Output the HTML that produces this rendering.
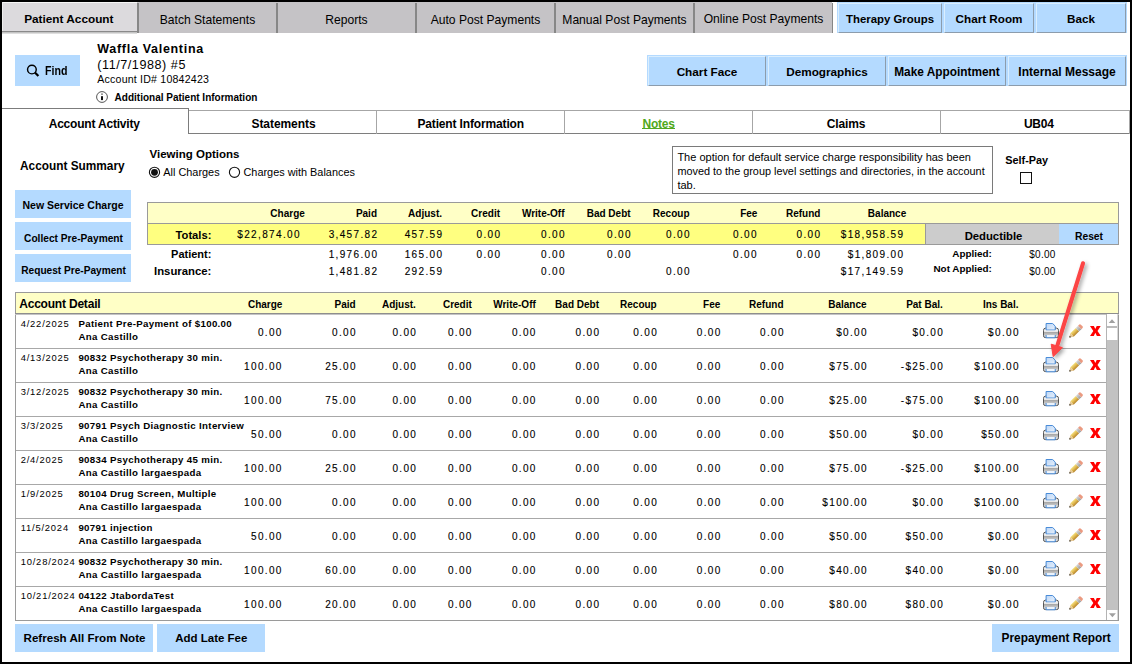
<!DOCTYPE html><html><head><meta charset="utf-8"><style>
html,body{margin:0;padding:0;background:#fff;}
body{width:1132px;height:664px;position:relative;overflow:hidden;font-family:'Liberation Sans',sans-serif;}
div,span,svg{position:absolute;}
.t{white-space:nowrap;line-height:1;}
</style></head><body>
<div style="left:2px;top:2px;width:135px;height:31px;background:#dcdadd;"></div>
<div style="left:2px;top:2px;width:135px;height:1px;background:#f6f6f6;"></div>
<div style="left:2px;top:2px;width:1px;height:29px;background:#ededed;"></div>
<div style="left:2px;top:31px;width:135px;height:1px;background:#8a8a8a;"></div>
<div style="left:2px;top:32px;width:135px;height:1px;background:#c4c4c4;"></div>
<div style="left:2px;top:33px;width:135px;height:1px;background:#dedede;"></div>
<span class="t" style="left:-231.2px;width:600px;text-align:center;top:14px;font-size:11.8px;font-weight:bold;color:#000;">Patient Account</span>
<div style="left:137px;top:2px;width:139px;height:31px;background:#c5c3c6;"></div>
<div style="left:137px;top:3px;width:2px;height:30px;background:#878787;"></div>
<span class="t" style="left:-92.5px;width:600px;text-align:center;top:14px;font-size:12.1px;color:#000;">Batch Statements</span>
<div style="left:276px;top:2px;width:139px;height:31px;background:#c5c3c6;"></div>
<div style="left:276px;top:3px;width:2px;height:30px;background:#878787;"></div>
<span class="t" style="left:46.5px;width:600px;text-align:center;top:14px;font-size:12.1px;color:#000;">Reports</span>
<div style="left:415px;top:2px;width:139px;height:31px;background:#c5c3c6;"></div>
<div style="left:415px;top:3px;width:2px;height:30px;background:#878787;"></div>
<span class="t" style="left:185.5px;width:600px;text-align:center;top:14px;font-size:12.1px;color:#000;">Auto Post Payments</span>
<div style="left:554px;top:2px;width:139px;height:31px;background:#c5c3c6;"></div>
<div style="left:554px;top:3px;width:2px;height:30px;background:#878787;"></div>
<span class="t" style="left:324.5px;width:600px;text-align:center;top:14px;font-size:12.1px;color:#000;">Manual Post Payments</span>
<div style="left:693px;top:2px;width:139px;height:31px;background:#c5c3c6;"></div>
<div style="left:693px;top:3px;width:2px;height:30px;background:#878787;"></div>
<span class="t" style="left:463.5px;width:600px;text-align:center;top:13px;font-size:12.1px;color:#000;">Online Post Payments</span>
<div style="left:832px;top:3px;width:1px;height:30px;background:#878787;"></div>
<div style="left:837px;top:2px;width:290px;height:31px;background:#b4daff;"></div>
<div style="left:838px;top:3px;width:104px;height:30px;background:#b4daff;border-top:1px solid #daeefe;border-left:1px solid #daeefe;border-right:1px solid #8c9cac;border-bottom:1px solid #8c9cac;box-sizing:border-box;"></div>
<span class="t" style="left:590.0px;width:600px;text-align:center;top:14px;font-size:11.4px;font-weight:bold;color:#000;">Therapy Groups</span>
<div style="left:944px;top:3px;width:90px;height:30px;background:#b4daff;border-top:1px solid #daeefe;border-left:1px solid #daeefe;border-right:1px solid #8c9cac;border-bottom:1px solid #8c9cac;box-sizing:border-box;"></div>
<span class="t" style="left:689.0px;width:600px;text-align:center;top:13px;font-size:11.7px;font-weight:bold;color:#000;">Chart Room</span>
<div style="left:1036px;top:3px;width:90px;height:30px;background:#b4daff;border-top:1px solid #daeefe;border-left:1px solid #daeefe;border-right:1px solid #8c9cac;border-bottom:1px solid #8c9cac;box-sizing:border-box;"></div>
<span class="t" style="left:781.0px;width:600px;text-align:center;top:13px;font-size:11.7px;font-weight:bold;color:#000;">Back</span>
<div style="left:15px;top:55px;width:65px;height:31px;background:#b4daff;"></div>
<svg style="left:25px;top:63px" width="16" height="16" viewBox="0 0 16 16"><circle cx="6.9" cy="6.5" r="4.35" fill="none" stroke="#000" stroke-width="1.45"/><line x1="9.9" y1="9.5" x2="13.4" y2="13.0" stroke="#000" stroke-width="2.2" stroke-linecap="butt"/></svg>
<span class="t" style="left:45.3px;top:65px;font-size:12px;font-weight:bold;color:#000;transform:scaleX(0.885);transform-origin:left top;">Find</span>
<span class="t" style="left:97.3px;top:43px;font-size:12.5px;font-weight:bold;letter-spacing:0.7px;color:#000;">Waffla Valentina</span>
<span class="t" style="left:97.3px;top:59px;font-size:12.6px;letter-spacing:0.55px;color:#000;">(11/7/1988) #5</span>
<span class="t" style="left:97.3px;top:74px;font-size:10.6px;letter-spacing:0.2px;color:#000;">Account ID# 10842423</span>
<svg style="left:96px;top:90.8px" width="12" height="12" viewBox="0 0 12 12"><circle cx="6" cy="6" r="5.4" fill="none" stroke="#555" stroke-width="1"/><rect x="5" y="5.2" width="2" height="3.9" fill="#111"/><rect x="5.2" y="2.4" width="1.6" height="1.5" fill="#777"/></svg>
<span class="t" style="left:114.6px;top:93px;font-size:10.0px;font-weight:bold;color:#000;">Additional Patient Information</span>
<div style="left:647px;top:55px;width:480px;height:31px;background:#b4daff;"></div>
<div style="left:648px;top:56px;width:118px;height:30px;background:#b4daff;border-top:1px solid #daeefe;border-left:1px solid #daeefe;border-right:1px solid #8c9cac;border-bottom:1px solid #8c9cac;box-sizing:border-box;"></div>
<span class="t" style="left:407.0px;width:600px;text-align:center;top:66px;font-size:11.76px;font-weight:bold;color:#000;">Chart Face</span>
<div style="left:768px;top:56px;width:118px;height:30px;background:#b4daff;border-top:1px solid #daeefe;border-left:1px solid #daeefe;border-right:1px solid #8c9cac;border-bottom:1px solid #8c9cac;box-sizing:border-box;"></div>
<span class="t" style="left:527.0px;width:600px;text-align:center;top:66px;font-size:11.76px;font-weight:bold;color:#000;">Demographics</span>
<div style="left:888px;top:56px;width:118px;height:30px;background:#b4daff;border-top:1px solid #daeefe;border-left:1px solid #daeefe;border-right:1px solid #8c9cac;border-bottom:1px solid #8c9cac;box-sizing:border-box;"></div>
<span class="t" style="left:647.0px;width:600px;text-align:center;top:67px;font-size:11.85px;font-weight:bold;color:#000;">Make Appointment</span>
<div style="left:1008px;top:56px;width:118px;height:30px;background:#b4daff;border-top:1px solid #daeefe;border-left:1px solid #daeefe;border-right:1px solid #8c9cac;border-bottom:1px solid #8c9cac;box-sizing:border-box;"></div>
<span class="t" style="left:767.0px;width:600px;text-align:center;top:66px;font-size:12.0px;font-weight:bold;color:#000;">Internal Message</span>
<div style="left:2px;top:108px;width:187px;height:1px;background:#7c7c7c;"></div>
<div style="left:188px;top:108px;width:1px;height:26px;background:#7c7c7c;"></div>
<div style="left:189px;top:110px;width:941px;height:1px;background:#a6a6a6;"></div>
<div style="left:189px;top:133px;width:941px;height:1px;background:#7e7e7e;"></div>
<div style="left:376px;top:110px;width:1px;height:24px;background:#a6a6a6;"></div>
<div style="left:564px;top:110px;width:1px;height:24px;background:#a6a6a6;"></div>
<div style="left:752px;top:110px;width:1px;height:24px;background:#a6a6a6;"></div>
<div style="left:940px;top:110px;width:1px;height:24px;background:#a6a6a6;"></div>
<div style="left:1129px;top:110px;width:1px;height:24px;background:#a6a6a6;"></div>
<span class="t" style="left:-205.8px;width:600px;text-align:center;top:118px;font-size:12px;font-weight:bold;letter-spacing:-0.2px;color:#000;">Account Activity</span>
<span class="t" style="left:-16.5px;width:600px;text-align:center;top:118px;font-size:12px;font-weight:bold;letter-spacing:-0.07px;color:#000;">Statements</span>
<span class="t" style="left:170.7px;width:600px;text-align:center;top:118px;font-size:12px;font-weight:bold;letter-spacing:-0.15px;color:#000;">Patient Information</span>
<span class="t" style="left:358.6px;width:600px;text-align:center;top:118px;font-size:12px;font-weight:bold;letter-spacing:-0.2px;color:#50a820;">Notes</span>
<span class="t" style="left:546px;width:600px;text-align:center;top:118px;font-size:12px;font-weight:bold;letter-spacing:-0.15px;color:#000;">Claims</span>
<span class="t" style="left:738.8px;width:600px;text-align:center;top:118px;font-size:12px;font-weight:bold;letter-spacing:-0.25px;color:#000;">UB04</span>
<div style="left:642px;top:128px;width:33px;height:1px;background:#50a820;"></div>
<span class="t" style="left:20px;top:161px;font-size:11.85px;font-weight:bold;color:#000;">Account Summary</span>
<div style="left:15px;top:190px;width:116px;height:28px;background:#b4daff;"></div>
<span class="t" style="left:-227px;width:600px;text-align:center;top:200px;font-size:10.5px;font-weight:bold;color:#000;">New Service Charge</span>
<div style="left:15px;top:222px;width:116px;height:28px;background:#b4daff;"></div>
<span class="t" style="left:-226.5px;width:600px;text-align:center;top:234px;font-size:10.18px;font-weight:bold;color:#000;">Collect Pre-Payment</span>
<div style="left:15px;top:254px;width:116px;height:28px;background:#b4daff;"></div>
<span class="t" style="left:-226.4px;width:600px;text-align:center;top:266px;font-size:10.13px;font-weight:bold;color:#000;">Request Pre-Payment</span>
<span class="t" style="left:149.5px;top:149px;font-size:11.5px;font-weight:bold;color:#000;">Viewing Options</span>
<svg style="left:148px;top:166px" width="14" height="13" viewBox="0 0 14 13"><circle cx="6.5" cy="6.3" r="5.1" fill="#fff" stroke="#111" stroke-width="1.1"/><circle cx="6.5" cy="6.3" r="3.4" fill="#111"/></svg>
<span class="t" style="left:163.3px;top:167px;font-size:10.9px;color:#000;">All Charges</span>
<svg style="left:228px;top:166px" width="14" height="13" viewBox="0 0 14 13"><circle cx="6.5" cy="6.3" r="5.1" fill="#fff" stroke="#111" stroke-width="1.1"/></svg>
<span class="t" style="left:243.5px;top:167px;font-size:10.9px;color:#000;">Charges with Balances</span>
<div style="left:672px;top:146px;width:321px;height:48px;border:1px solid #7a7a7a;box-sizing:border-box;"></div>
<span class="t" style="left:677.4px;top:152px;font-size:11.0px;color:#000;">The option for default service charge responsibility has been</span>
<span class="t" style="left:677.4px;top:166px;font-size:10.87px;color:#000;">moved to the group level settings and directories, in the account</span>
<span class="t" style="left:677.4px;top:180px;font-size:11.0px;color:#000;">tab.</span>
<span class="t" style="left:1005.2px;top:155px;font-size:10.9px;font-weight:bold;color:#000;">Self-Pay</span>
<div style="left:1020px;top:172px;width:12px;height:12px;border:1.2px solid #111;box-sizing:border-box;background:#fff;"></div>
<div style="left:147px;top:202px;width:972px;height:43px;border:1px solid #9a9a9a;box-sizing:border-box;"></div>
<div style="left:148px;top:203px;width:970px;height:20px;background:#ffffc6;"></div>
<div style="left:147px;top:223px;width:972px;height:1px;background:#9a9a9a;"></div>
<div style="left:148px;top:224px;width:777px;height:20px;background:#ffff80;"></div>
<div style="left:925px;top:224px;width:134px;height:20px;background:#cccccc;border-left:1px solid #9a9a9a;box-sizing:border-box;"></div>
<div style="left:1059px;top:224px;width:59px;height:20px;background:#b4daff;"></div>
<span class="t" style="left:693.5px;width:600px;text-align:center;top:231px;font-size:11.3px;font-weight:bold;color:#000;">Deductible</span>
<span class="t" style="left:789px;width:600px;text-align:center;top:232px;font-size:10.3px;font-weight:bold;color:#000;">Reset</span>
<span class="t" style="right:827.2px;top:209px;font-size:10.0px;font-weight:bold;color:#000;">Charge</span>
<span class="t" style="right:755px;top:209px;font-size:10.0px;font-weight:bold;color:#000;">Paid</span>
<span class="t" style="right:690px;top:209px;font-size:10.0px;font-weight:bold;color:#000;">Adjust.</span>
<span class="t" style="right:632px;top:209px;font-size:10.0px;font-weight:bold;color:#000;">Credit</span>
<span class="t" style="right:567.5px;top:209px;font-size:10.0px;font-weight:bold;color:#000;">Write-Off</span>
<span class="t" style="right:501.4px;top:209px;font-size:10.0px;font-weight:bold;color:#000;">Bad Debt</span>
<span class="t" style="right:442.5px;top:209px;font-size:10.0px;font-weight:bold;color:#000;">Recoup</span>
<span class="t" style="right:374.6px;top:209px;font-size:10.0px;font-weight:bold;color:#000;">Fee</span>
<span class="t" style="right:311.6px;top:209px;font-size:10.0px;font-weight:bold;color:#000;">Refund</span>
<span class="t" style="right:225.79999999999995px;top:209px;font-size:10.0px;font-weight:bold;color:#000;">Balance</span>
<span class="t" style="right:920.6px;top:230px;font-size:11.2px;font-weight:bold;color:#000;">Totals:</span>
<span class="t" style="right:920.6px;top:249px;font-size:11.0px;font-weight:bold;color:#000;">Patient:</span>
<span class="t" style="right:920.6px;top:266px;font-size:11.35px;font-weight:bold;color:#000;">Insurance:</span>
<span class="t" style="right:831.15px;top:230px;font-size:10.0px;letter-spacing:1.35px;color:#000;-webkit-text-stroke:0.12px #000;">$22,874.00</span>
<span class="t" style="right:753.65px;top:230px;font-size:10.0px;letter-spacing:1.35px;color:#000;-webkit-text-stroke:0.12px #000;">3,457.82</span>
<span class="t" style="right:688.65px;top:230px;font-size:10.0px;letter-spacing:1.35px;color:#000;-webkit-text-stroke:0.12px #000;">457.59</span>
<span class="t" style="right:630.65px;top:230px;font-size:10.0px;letter-spacing:1.35px;color:#000;-webkit-text-stroke:0.12px #000;">0.00</span>
<span class="t" style="right:566.15px;top:230px;font-size:10.0px;letter-spacing:1.35px;color:#000;-webkit-text-stroke:0.12px #000;">0.00</span>
<span class="t" style="right:500.04999999999995px;top:230px;font-size:10.0px;letter-spacing:1.35px;color:#000;-webkit-text-stroke:0.12px #000;">0.00</span>
<span class="t" style="right:441.15px;top:230px;font-size:10.0px;letter-spacing:1.35px;color:#000;-webkit-text-stroke:0.12px #000;">0.00</span>
<span class="t" style="right:374.15px;top:230px;font-size:10.0px;letter-spacing:1.35px;color:#000;-webkit-text-stroke:0.12px #000;">0.00</span>
<span class="t" style="right:310.65px;top:230px;font-size:10.0px;letter-spacing:1.35px;color:#000;-webkit-text-stroke:0.12px #000;">0.00</span>
<span class="t" style="right:227.65px;top:230px;font-size:10.0px;letter-spacing:1.35px;color:#000;-webkit-text-stroke:0.12px #000;">$18,958.59</span>
<span class="t" style="right:753.65px;top:250px;font-size:10.0px;letter-spacing:1.35px;color:#000;-webkit-text-stroke:0.12px #000;">1,976.00</span>
<span class="t" style="right:688.65px;top:250px;font-size:10.0px;letter-spacing:1.35px;color:#000;-webkit-text-stroke:0.12px #000;">165.00</span>
<span class="t" style="right:630.65px;top:250px;font-size:10.0px;letter-spacing:1.35px;color:#000;-webkit-text-stroke:0.12px #000;">0.00</span>
<span class="t" style="right:566.15px;top:250px;font-size:10.0px;letter-spacing:1.35px;color:#000;-webkit-text-stroke:0.12px #000;">0.00</span>
<span class="t" style="right:500.04999999999995px;top:250px;font-size:10.0px;letter-spacing:1.35px;color:#000;-webkit-text-stroke:0.12px #000;">0.00</span>
<span class="t" style="right:374.15px;top:250px;font-size:10.0px;letter-spacing:1.35px;color:#000;-webkit-text-stroke:0.12px #000;">0.00</span>
<span class="t" style="right:310.65px;top:250px;font-size:10.0px;letter-spacing:1.35px;color:#000;-webkit-text-stroke:0.12px #000;">0.00</span>
<span class="t" style="right:227.65px;top:250px;font-size:10.0px;letter-spacing:1.35px;color:#000;-webkit-text-stroke:0.12px #000;">$1,809.00</span>
<span class="t" style="right:753.65px;top:267px;font-size:10.0px;letter-spacing:1.35px;color:#000;-webkit-text-stroke:0.12px #000;">1,481.82</span>
<span class="t" style="right:688.65px;top:267px;font-size:10.0px;letter-spacing:1.35px;color:#000;-webkit-text-stroke:0.12px #000;">292.59</span>
<span class="t" style="right:566.15px;top:267px;font-size:10.0px;letter-spacing:1.35px;color:#000;-webkit-text-stroke:0.12px #000;">0.00</span>
<span class="t" style="right:441.15px;top:267px;font-size:10.0px;letter-spacing:1.35px;color:#000;-webkit-text-stroke:0.12px #000;">0.00</span>
<span class="t" style="right:227.65px;top:267px;font-size:10.0px;letter-spacing:1.35px;color:#000;-webkit-text-stroke:0.12px #000;">$17,149.59</span>
<span class="t" style="right:140.20000000000005px;top:249px;font-size:9.9px;font-weight:bold;color:#000;">Applied:</span>
<span class="t" style="right:140.20000000000005px;top:264px;font-size:9.9px;font-weight:bold;color:#000;">Not Applied:</span>
<span class="t" style="right:76.29999999999991px;top:250px;font-size:10.0px;letter-spacing:0.3px;color:#000;">$0.00</span>
<span class="t" style="right:76.29999999999991px;top:267px;font-size:10.0px;letter-spacing:0.3px;color:#000;">$0.00</span>
<div style="left:15px;top:292px;width:1104px;height:329px;border:1px solid #9a9a9a;box-sizing:border-box;"></div>
<div style="left:16px;top:293px;width:1102px;height:20px;background:#ffffc6;"></div>
<div style="left:15px;top:313px;width:1104px;height:1px;background:#8e8e8e;"></div>
<div style="left:15px;top:314px;width:1104px;height:1px;background:#c4c4c4;"></div>
<span class="t" style="left:19.2px;top:298px;font-size:12.0px;font-weight:bold;letter-spacing:-0.2px;color:#000;">Account Detail</span>
<span class="t" style="right:849.6px;top:300px;font-size:10.0px;font-weight:bold;color:#000;">Charge</span>
<span class="t" style="right:776.4px;top:300px;font-size:10.0px;font-weight:bold;color:#000;">Paid</span>
<span class="t" style="right:716.1px;top:300px;font-size:10.0px;font-weight:bold;color:#000;">Adjust.</span>
<span class="t" style="right:660.2px;top:300px;font-size:10.0px;font-weight:bold;color:#000;">Credit</span>
<span class="t" style="right:596.2px;top:300px;font-size:10.0px;font-weight:bold;color:#000;">Write-Off</span>
<span class="t" style="right:533px;top:300px;font-size:10.0px;font-weight:bold;color:#000;">Bad Debt</span>
<span class="t" style="right:475.29999999999995px;top:300px;font-size:10.0px;font-weight:bold;color:#000;">Recoup</span>
<span class="t" style="right:411.70000000000005px;top:300px;font-size:10.0px;font-weight:bold;color:#000;">Fee</span>
<span class="t" style="right:348.5px;top:300px;font-size:10.0px;font-weight:bold;color:#000;">Refund</span>
<span class="t" style="right:265.4px;top:300px;font-size:10.0px;font-weight:bold;color:#000;">Balance</span>
<span class="t" style="right:189.20000000000005px;top:300px;font-size:10.0px;font-weight:bold;color:#000;">Pat Bal.</span>
<span class="t" style="right:113.5px;top:300px;font-size:10.0px;font-weight:bold;color:#000;">Ins Bal.</span>
<div style="left:16px;top:348px;width:1090px;height:1px;background:#a8a8a8;"></div>
<span class="t" style="left:20.7px;top:319px;font-size:9.4px;letter-spacing:0.8px;color:#000;">4/22/2025</span>
<span class="t" style="left:78.4px;top:319px;font-size:9.7px;font-weight:bold;letter-spacing:0.33px;color:#000;">Patient Pre-Payment of $100.00</span>
<span class="t" style="left:78.4px;top:332px;font-size:9.7px;font-weight:bold;letter-spacing:0.33px;color:#000;">Ana Castillo</span>
<span class="t" style="right:849.25px;top:328px;font-size:10.0px;letter-spacing:1.35px;color:#000;-webkit-text-stroke:0.12px #000;">0.00</span>
<span class="t" style="right:775.05px;top:328px;font-size:10.0px;letter-spacing:1.35px;color:#000;-webkit-text-stroke:0.12px #000;">0.00</span>
<span class="t" style="right:714.75px;top:328px;font-size:10.0px;letter-spacing:1.35px;color:#000;-webkit-text-stroke:0.12px #000;">0.00</span>
<span class="t" style="right:659.25px;top:328px;font-size:10.0px;letter-spacing:1.35px;color:#000;-webkit-text-stroke:0.12px #000;">0.00</span>
<span class="t" style="right:595.25px;top:328px;font-size:10.0px;letter-spacing:1.35px;color:#000;-webkit-text-stroke:0.12px #000;">0.00</span>
<span class="t" style="right:531.65px;top:328px;font-size:10.0px;letter-spacing:1.35px;color:#000;-webkit-text-stroke:0.12px #000;">0.00</span>
<span class="t" style="right:473.94999999999993px;top:328px;font-size:10.0px;letter-spacing:1.35px;color:#000;-webkit-text-stroke:0.12px #000;">0.00</span>
<span class="t" style="right:410.35px;top:328px;font-size:10.0px;letter-spacing:1.35px;color:#000;-webkit-text-stroke:0.12px #000;">0.00</span>
<span class="t" style="right:347.15px;top:328px;font-size:10.0px;letter-spacing:1.35px;color:#000;-webkit-text-stroke:0.12px #000;">0.00</span>
<span class="t" style="right:264.04999999999995px;top:328px;font-size:10.0px;letter-spacing:1.35px;color:#000;-webkit-text-stroke:0.12px #000;">$0.00</span>
<span class="t" style="right:187.85000000000005px;top:328px;font-size:10.0px;letter-spacing:1.35px;color:#000;-webkit-text-stroke:0.12px #000;">$0.00</span>
<span class="t" style="right:112.15px;top:328px;font-size:10.0px;letter-spacing:1.35px;color:#000;-webkit-text-stroke:0.12px #000;">$0.00</span>
<svg style="left:1043px;top:322.8px" width="16" height="16" viewBox="0 0 17 17">
<defs><linearGradient id="pp0" x1="0" y1="0" x2="1" y2="1"><stop offset="0" stop-color="#bcd6f6"/><stop offset="1" stop-color="#e8f1fc"/></linearGradient>
<linearGradient id="pg0" x1="0" y1="0" x2="0" y2="1"><stop offset="0" stop-color="#ffffff"/><stop offset="0.35" stop-color="#e6e6e6"/><stop offset="0.45" stop-color="#a8a8a8"/><stop offset="0.7" stop-color="#c4c4c4"/><stop offset="1" stop-color="#f2f2f2"/></linearGradient></defs>
<path d="M3 5.5 Q3 5 3.5 5 H13.5 Q14 5 14 5.5" fill="none" stroke="#888" stroke-width="1"/>
<path d="M2.5 5.5 H14.5 Q16.5 5.5 16.5 8 V13.5 Q16.5 15.5 14.5 15.5 H2.5 Q0.5 15.5 0.5 13.5 V8 Q0.5 5.5 2.5 5.5 Z" fill="url(#pg0)" stroke="#3a3a3a" stroke-width="0.9"/>
<path d="M3.3 0.5 H10.2 L13 3.3 V7.5 H3.3 Z" fill="url(#pp0)" stroke="#3b82d4" stroke-width="1"/>
<rect x="2.2" y="8" width="12.6" height="0.8" fill="#f4f4f4"/>
<path d="M3.3 12.8 V15.7 H13 V12.8" fill="#eef5fd" stroke="#3b82d4" stroke-width="1"/>
</svg>
<svg style="left:1068.2px;top:323.6px;overflow:visible" width="15" height="15" viewBox="0 0 15 15">
<defs><linearGradient id="pc0" x1="0" y1="0" x2="0" y2="1"><stop offset="0" stop-color="#f4e07e"/><stop offset="0.5" stop-color="#e0b850"/><stop offset="1" stop-color="#b4822a"/></linearGradient>
<linearGradient id="pf0" x1="0" y1="0" x2="0" y2="1"><stop offset="0" stop-color="#d8d8d8"/><stop offset="1" stop-color="#9a9a9a"/></linearGradient></defs>
<g transform="rotate(-44 7.5 7.5)">
<path d="M2.6 5.1 H10.2 V9.9 H2.6 Z" fill="url(#pc0)"/>
<path d="M-1.15 7.5 L2.6 5.1 V9.9 Z" fill="#e5c690"/>
<path d="M-1.15 7.5 L0.4 6.5 V8.5 Z" fill="#1e1e1e"/>
<path d="M10.2 5.1 H13.4 V9.9 H10.2 Z" fill="url(#pf0)"/>
<path d="M13.4 5.1 H15 Q16.15 5.1 16.15 6.3 V8.7 Q16.15 9.9 15 9.9 H13.4 Z" fill="#eb9a80"/>
</g></svg>
<svg style="left:1090.1px;top:325.8px" width="12" height="11" viewBox="0 0 12 11"><path d="M0 0 H3.9 L5.3 2.9 L6.7 0 H10.7 L7.5 5 L10.9 10.1 H6.9 L5.3 6.8 L3.8 10.1 H0 L3.3 5 Z" fill="#ff0000"/></svg>
<div style="left:16px;top:382px;width:1090px;height:1px;background:#a8a8a8;"></div>
<span class="t" style="left:20.7px;top:353px;font-size:9.4px;letter-spacing:0.8px;color:#000;">4/13/2025</span>
<span class="t" style="left:78.4px;top:353px;font-size:9.7px;font-weight:bold;letter-spacing:0.33px;color:#000;">90832 Psychotherapy 30 min.</span>
<span class="t" style="left:78.4px;top:366px;font-size:9.7px;font-weight:bold;letter-spacing:0.33px;color:#000;">Ana Castillo</span>
<span class="t" style="right:849.25px;top:362px;font-size:10.0px;letter-spacing:1.35px;color:#000;-webkit-text-stroke:0.12px #000;">100.00</span>
<span class="t" style="right:775.05px;top:362px;font-size:10.0px;letter-spacing:1.35px;color:#000;-webkit-text-stroke:0.12px #000;">25.00</span>
<span class="t" style="right:714.75px;top:362px;font-size:10.0px;letter-spacing:1.35px;color:#000;-webkit-text-stroke:0.12px #000;">0.00</span>
<span class="t" style="right:659.25px;top:362px;font-size:10.0px;letter-spacing:1.35px;color:#000;-webkit-text-stroke:0.12px #000;">0.00</span>
<span class="t" style="right:595.25px;top:362px;font-size:10.0px;letter-spacing:1.35px;color:#000;-webkit-text-stroke:0.12px #000;">0.00</span>
<span class="t" style="right:531.65px;top:362px;font-size:10.0px;letter-spacing:1.35px;color:#000;-webkit-text-stroke:0.12px #000;">0.00</span>
<span class="t" style="right:473.94999999999993px;top:362px;font-size:10.0px;letter-spacing:1.35px;color:#000;-webkit-text-stroke:0.12px #000;">0.00</span>
<span class="t" style="right:410.35px;top:362px;font-size:10.0px;letter-spacing:1.35px;color:#000;-webkit-text-stroke:0.12px #000;">0.00</span>
<span class="t" style="right:347.15px;top:362px;font-size:10.0px;letter-spacing:1.35px;color:#000;-webkit-text-stroke:0.12px #000;">0.00</span>
<span class="t" style="right:264.04999999999995px;top:362px;font-size:10.0px;letter-spacing:1.35px;color:#000;-webkit-text-stroke:0.12px #000;">$75.00</span>
<span class="t" style="right:187.85000000000005px;top:362px;font-size:10.0px;letter-spacing:1.35px;color:#000;-webkit-text-stroke:0.12px #000;">-$25.00</span>
<span class="t" style="right:112.15px;top:362px;font-size:10.0px;letter-spacing:1.35px;color:#000;-webkit-text-stroke:0.12px #000;">$100.00</span>
<svg style="left:1043px;top:356.8px" width="16" height="16" viewBox="0 0 17 17">
<defs><linearGradient id="pp1" x1="0" y1="0" x2="1" y2="1"><stop offset="0" stop-color="#bcd6f6"/><stop offset="1" stop-color="#e8f1fc"/></linearGradient>
<linearGradient id="pg1" x1="0" y1="0" x2="0" y2="1"><stop offset="0" stop-color="#ffffff"/><stop offset="0.35" stop-color="#e6e6e6"/><stop offset="0.45" stop-color="#a8a8a8"/><stop offset="0.7" stop-color="#c4c4c4"/><stop offset="1" stop-color="#f2f2f2"/></linearGradient></defs>
<path d="M3 5.5 Q3 5 3.5 5 H13.5 Q14 5 14 5.5" fill="none" stroke="#888" stroke-width="1"/>
<path d="M2.5 5.5 H14.5 Q16.5 5.5 16.5 8 V13.5 Q16.5 15.5 14.5 15.5 H2.5 Q0.5 15.5 0.5 13.5 V8 Q0.5 5.5 2.5 5.5 Z" fill="url(#pg1)" stroke="#3a3a3a" stroke-width="0.9"/>
<path d="M3.3 0.5 H10.2 L13 3.3 V7.5 H3.3 Z" fill="url(#pp1)" stroke="#3b82d4" stroke-width="1"/>
<rect x="2.2" y="8" width="12.6" height="0.8" fill="#f4f4f4"/>
<path d="M3.3 12.8 V15.7 H13 V12.8" fill="#eef5fd" stroke="#3b82d4" stroke-width="1"/>
</svg>
<svg style="left:1068.2px;top:357.6px;overflow:visible" width="15" height="15" viewBox="0 0 15 15">
<defs><linearGradient id="pc1" x1="0" y1="0" x2="0" y2="1"><stop offset="0" stop-color="#f4e07e"/><stop offset="0.5" stop-color="#e0b850"/><stop offset="1" stop-color="#b4822a"/></linearGradient>
<linearGradient id="pf1" x1="0" y1="0" x2="0" y2="1"><stop offset="0" stop-color="#d8d8d8"/><stop offset="1" stop-color="#9a9a9a"/></linearGradient></defs>
<g transform="rotate(-44 7.5 7.5)">
<path d="M2.6 5.1 H10.2 V9.9 H2.6 Z" fill="url(#pc1)"/>
<path d="M-1.15 7.5 L2.6 5.1 V9.9 Z" fill="#e5c690"/>
<path d="M-1.15 7.5 L0.4 6.5 V8.5 Z" fill="#1e1e1e"/>
<path d="M10.2 5.1 H13.4 V9.9 H10.2 Z" fill="url(#pf1)"/>
<path d="M13.4 5.1 H15 Q16.15 5.1 16.15 6.3 V8.7 Q16.15 9.9 15 9.9 H13.4 Z" fill="#eb9a80"/>
</g></svg>
<svg style="left:1090.1px;top:359.8px" width="12" height="11" viewBox="0 0 12 11"><path d="M0 0 H3.9 L5.3 2.9 L6.7 0 H10.7 L7.5 5 L10.9 10.1 H6.9 L5.3 6.8 L3.8 10.1 H0 L3.3 5 Z" fill="#ff0000"/></svg>
<div style="left:16px;top:416px;width:1090px;height:1px;background:#a8a8a8;"></div>
<span class="t" style="left:20.7px;top:387px;font-size:9.4px;letter-spacing:0.8px;color:#000;">3/12/2025</span>
<span class="t" style="left:78.4px;top:387px;font-size:9.7px;font-weight:bold;letter-spacing:0.33px;color:#000;">90832 Psychotherapy 30 min.</span>
<span class="t" style="left:78.4px;top:400px;font-size:9.7px;font-weight:bold;letter-spacing:0.33px;color:#000;">Ana Castillo</span>
<span class="t" style="right:849.25px;top:396px;font-size:10.0px;letter-spacing:1.35px;color:#000;-webkit-text-stroke:0.12px #000;">100.00</span>
<span class="t" style="right:775.05px;top:396px;font-size:10.0px;letter-spacing:1.35px;color:#000;-webkit-text-stroke:0.12px #000;">75.00</span>
<span class="t" style="right:714.75px;top:396px;font-size:10.0px;letter-spacing:1.35px;color:#000;-webkit-text-stroke:0.12px #000;">0.00</span>
<span class="t" style="right:659.25px;top:396px;font-size:10.0px;letter-spacing:1.35px;color:#000;-webkit-text-stroke:0.12px #000;">0.00</span>
<span class="t" style="right:595.25px;top:396px;font-size:10.0px;letter-spacing:1.35px;color:#000;-webkit-text-stroke:0.12px #000;">0.00</span>
<span class="t" style="right:531.65px;top:396px;font-size:10.0px;letter-spacing:1.35px;color:#000;-webkit-text-stroke:0.12px #000;">0.00</span>
<span class="t" style="right:473.94999999999993px;top:396px;font-size:10.0px;letter-spacing:1.35px;color:#000;-webkit-text-stroke:0.12px #000;">0.00</span>
<span class="t" style="right:410.35px;top:396px;font-size:10.0px;letter-spacing:1.35px;color:#000;-webkit-text-stroke:0.12px #000;">0.00</span>
<span class="t" style="right:347.15px;top:396px;font-size:10.0px;letter-spacing:1.35px;color:#000;-webkit-text-stroke:0.12px #000;">0.00</span>
<span class="t" style="right:264.04999999999995px;top:396px;font-size:10.0px;letter-spacing:1.35px;color:#000;-webkit-text-stroke:0.12px #000;">$25.00</span>
<span class="t" style="right:187.85000000000005px;top:396px;font-size:10.0px;letter-spacing:1.35px;color:#000;-webkit-text-stroke:0.12px #000;">-$75.00</span>
<span class="t" style="right:112.15px;top:396px;font-size:10.0px;letter-spacing:1.35px;color:#000;-webkit-text-stroke:0.12px #000;">$100.00</span>
<svg style="left:1043px;top:390.8px" width="16" height="16" viewBox="0 0 17 17">
<defs><linearGradient id="pp2" x1="0" y1="0" x2="1" y2="1"><stop offset="0" stop-color="#bcd6f6"/><stop offset="1" stop-color="#e8f1fc"/></linearGradient>
<linearGradient id="pg2" x1="0" y1="0" x2="0" y2="1"><stop offset="0" stop-color="#ffffff"/><stop offset="0.35" stop-color="#e6e6e6"/><stop offset="0.45" stop-color="#a8a8a8"/><stop offset="0.7" stop-color="#c4c4c4"/><stop offset="1" stop-color="#f2f2f2"/></linearGradient></defs>
<path d="M3 5.5 Q3 5 3.5 5 H13.5 Q14 5 14 5.5" fill="none" stroke="#888" stroke-width="1"/>
<path d="M2.5 5.5 H14.5 Q16.5 5.5 16.5 8 V13.5 Q16.5 15.5 14.5 15.5 H2.5 Q0.5 15.5 0.5 13.5 V8 Q0.5 5.5 2.5 5.5 Z" fill="url(#pg2)" stroke="#3a3a3a" stroke-width="0.9"/>
<path d="M3.3 0.5 H10.2 L13 3.3 V7.5 H3.3 Z" fill="url(#pp2)" stroke="#3b82d4" stroke-width="1"/>
<rect x="2.2" y="8" width="12.6" height="0.8" fill="#f4f4f4"/>
<path d="M3.3 12.8 V15.7 H13 V12.8" fill="#eef5fd" stroke="#3b82d4" stroke-width="1"/>
</svg>
<svg style="left:1068.2px;top:391.6px;overflow:visible" width="15" height="15" viewBox="0 0 15 15">
<defs><linearGradient id="pc2" x1="0" y1="0" x2="0" y2="1"><stop offset="0" stop-color="#f4e07e"/><stop offset="0.5" stop-color="#e0b850"/><stop offset="1" stop-color="#b4822a"/></linearGradient>
<linearGradient id="pf2" x1="0" y1="0" x2="0" y2="1"><stop offset="0" stop-color="#d8d8d8"/><stop offset="1" stop-color="#9a9a9a"/></linearGradient></defs>
<g transform="rotate(-44 7.5 7.5)">
<path d="M2.6 5.1 H10.2 V9.9 H2.6 Z" fill="url(#pc2)"/>
<path d="M-1.15 7.5 L2.6 5.1 V9.9 Z" fill="#e5c690"/>
<path d="M-1.15 7.5 L0.4 6.5 V8.5 Z" fill="#1e1e1e"/>
<path d="M10.2 5.1 H13.4 V9.9 H10.2 Z" fill="url(#pf2)"/>
<path d="M13.4 5.1 H15 Q16.15 5.1 16.15 6.3 V8.7 Q16.15 9.9 15 9.9 H13.4 Z" fill="#eb9a80"/>
</g></svg>
<svg style="left:1090.1px;top:393.8px" width="12" height="11" viewBox="0 0 12 11"><path d="M0 0 H3.9 L5.3 2.9 L6.7 0 H10.7 L7.5 5 L10.9 10.1 H6.9 L5.3 6.8 L3.8 10.1 H0 L3.3 5 Z" fill="#ff0000"/></svg>
<div style="left:16px;top:450px;width:1090px;height:1px;background:#a8a8a8;"></div>
<span class="t" style="left:20.7px;top:421px;font-size:9.4px;letter-spacing:0.8px;color:#000;">3/3/2025</span>
<span class="t" style="left:78.4px;top:421px;font-size:9.7px;font-weight:bold;letter-spacing:0.33px;color:#000;">90791 Psych Diagnostic Interview</span>
<span class="t" style="left:78.4px;top:434px;font-size:9.7px;font-weight:bold;letter-spacing:0.33px;color:#000;">Ana Castillo</span>
<span class="t" style="right:849.25px;top:430px;font-size:10.0px;letter-spacing:1.35px;color:#000;-webkit-text-stroke:0.12px #000;">50.00</span>
<span class="t" style="right:775.05px;top:430px;font-size:10.0px;letter-spacing:1.35px;color:#000;-webkit-text-stroke:0.12px #000;">0.00</span>
<span class="t" style="right:714.75px;top:430px;font-size:10.0px;letter-spacing:1.35px;color:#000;-webkit-text-stroke:0.12px #000;">0.00</span>
<span class="t" style="right:659.25px;top:430px;font-size:10.0px;letter-spacing:1.35px;color:#000;-webkit-text-stroke:0.12px #000;">0.00</span>
<span class="t" style="right:595.25px;top:430px;font-size:10.0px;letter-spacing:1.35px;color:#000;-webkit-text-stroke:0.12px #000;">0.00</span>
<span class="t" style="right:531.65px;top:430px;font-size:10.0px;letter-spacing:1.35px;color:#000;-webkit-text-stroke:0.12px #000;">0.00</span>
<span class="t" style="right:473.94999999999993px;top:430px;font-size:10.0px;letter-spacing:1.35px;color:#000;-webkit-text-stroke:0.12px #000;">0.00</span>
<span class="t" style="right:410.35px;top:430px;font-size:10.0px;letter-spacing:1.35px;color:#000;-webkit-text-stroke:0.12px #000;">0.00</span>
<span class="t" style="right:347.15px;top:430px;font-size:10.0px;letter-spacing:1.35px;color:#000;-webkit-text-stroke:0.12px #000;">0.00</span>
<span class="t" style="right:264.04999999999995px;top:430px;font-size:10.0px;letter-spacing:1.35px;color:#000;-webkit-text-stroke:0.12px #000;">$50.00</span>
<span class="t" style="right:187.85000000000005px;top:430px;font-size:10.0px;letter-spacing:1.35px;color:#000;-webkit-text-stroke:0.12px #000;">$0.00</span>
<span class="t" style="right:112.15px;top:430px;font-size:10.0px;letter-spacing:1.35px;color:#000;-webkit-text-stroke:0.12px #000;">$50.00</span>
<svg style="left:1043px;top:424.8px" width="16" height="16" viewBox="0 0 17 17">
<defs><linearGradient id="pp3" x1="0" y1="0" x2="1" y2="1"><stop offset="0" stop-color="#bcd6f6"/><stop offset="1" stop-color="#e8f1fc"/></linearGradient>
<linearGradient id="pg3" x1="0" y1="0" x2="0" y2="1"><stop offset="0" stop-color="#ffffff"/><stop offset="0.35" stop-color="#e6e6e6"/><stop offset="0.45" stop-color="#a8a8a8"/><stop offset="0.7" stop-color="#c4c4c4"/><stop offset="1" stop-color="#f2f2f2"/></linearGradient></defs>
<path d="M3 5.5 Q3 5 3.5 5 H13.5 Q14 5 14 5.5" fill="none" stroke="#888" stroke-width="1"/>
<path d="M2.5 5.5 H14.5 Q16.5 5.5 16.5 8 V13.5 Q16.5 15.5 14.5 15.5 H2.5 Q0.5 15.5 0.5 13.5 V8 Q0.5 5.5 2.5 5.5 Z" fill="url(#pg3)" stroke="#3a3a3a" stroke-width="0.9"/>
<path d="M3.3 0.5 H10.2 L13 3.3 V7.5 H3.3 Z" fill="url(#pp3)" stroke="#3b82d4" stroke-width="1"/>
<rect x="2.2" y="8" width="12.6" height="0.8" fill="#f4f4f4"/>
<path d="M3.3 12.8 V15.7 H13 V12.8" fill="#eef5fd" stroke="#3b82d4" stroke-width="1"/>
</svg>
<svg style="left:1068.2px;top:425.6px;overflow:visible" width="15" height="15" viewBox="0 0 15 15">
<defs><linearGradient id="pc3" x1="0" y1="0" x2="0" y2="1"><stop offset="0" stop-color="#f4e07e"/><stop offset="0.5" stop-color="#e0b850"/><stop offset="1" stop-color="#b4822a"/></linearGradient>
<linearGradient id="pf3" x1="0" y1="0" x2="0" y2="1"><stop offset="0" stop-color="#d8d8d8"/><stop offset="1" stop-color="#9a9a9a"/></linearGradient></defs>
<g transform="rotate(-44 7.5 7.5)">
<path d="M2.6 5.1 H10.2 V9.9 H2.6 Z" fill="url(#pc3)"/>
<path d="M-1.15 7.5 L2.6 5.1 V9.9 Z" fill="#e5c690"/>
<path d="M-1.15 7.5 L0.4 6.5 V8.5 Z" fill="#1e1e1e"/>
<path d="M10.2 5.1 H13.4 V9.9 H10.2 Z" fill="url(#pf3)"/>
<path d="M13.4 5.1 H15 Q16.15 5.1 16.15 6.3 V8.7 Q16.15 9.9 15 9.9 H13.4 Z" fill="#eb9a80"/>
</g></svg>
<svg style="left:1090.1px;top:427.8px" width="12" height="11" viewBox="0 0 12 11"><path d="M0 0 H3.9 L5.3 2.9 L6.7 0 H10.7 L7.5 5 L10.9 10.1 H6.9 L5.3 6.8 L3.8 10.1 H0 L3.3 5 Z" fill="#ff0000"/></svg>
<div style="left:16px;top:484px;width:1090px;height:1px;background:#a8a8a8;"></div>
<span class="t" style="left:20.7px;top:455px;font-size:9.4px;letter-spacing:0.8px;color:#000;">2/4/2025</span>
<span class="t" style="left:78.4px;top:455px;font-size:9.7px;font-weight:bold;letter-spacing:0.33px;color:#000;">90834 Psychotherapy 45 min.</span>
<span class="t" style="left:78.4px;top:468px;font-size:9.7px;font-weight:bold;letter-spacing:0.33px;color:#000;">Ana Castillo largaespada</span>
<span class="t" style="right:849.25px;top:464px;font-size:10.0px;letter-spacing:1.35px;color:#000;-webkit-text-stroke:0.12px #000;">100.00</span>
<span class="t" style="right:775.05px;top:464px;font-size:10.0px;letter-spacing:1.35px;color:#000;-webkit-text-stroke:0.12px #000;">25.00</span>
<span class="t" style="right:714.75px;top:464px;font-size:10.0px;letter-spacing:1.35px;color:#000;-webkit-text-stroke:0.12px #000;">0.00</span>
<span class="t" style="right:659.25px;top:464px;font-size:10.0px;letter-spacing:1.35px;color:#000;-webkit-text-stroke:0.12px #000;">0.00</span>
<span class="t" style="right:595.25px;top:464px;font-size:10.0px;letter-spacing:1.35px;color:#000;-webkit-text-stroke:0.12px #000;">0.00</span>
<span class="t" style="right:531.65px;top:464px;font-size:10.0px;letter-spacing:1.35px;color:#000;-webkit-text-stroke:0.12px #000;">0.00</span>
<span class="t" style="right:473.94999999999993px;top:464px;font-size:10.0px;letter-spacing:1.35px;color:#000;-webkit-text-stroke:0.12px #000;">0.00</span>
<span class="t" style="right:410.35px;top:464px;font-size:10.0px;letter-spacing:1.35px;color:#000;-webkit-text-stroke:0.12px #000;">0.00</span>
<span class="t" style="right:347.15px;top:464px;font-size:10.0px;letter-spacing:1.35px;color:#000;-webkit-text-stroke:0.12px #000;">0.00</span>
<span class="t" style="right:264.04999999999995px;top:464px;font-size:10.0px;letter-spacing:1.35px;color:#000;-webkit-text-stroke:0.12px #000;">$75.00</span>
<span class="t" style="right:187.85000000000005px;top:464px;font-size:10.0px;letter-spacing:1.35px;color:#000;-webkit-text-stroke:0.12px #000;">-$25.00</span>
<span class="t" style="right:112.15px;top:464px;font-size:10.0px;letter-spacing:1.35px;color:#000;-webkit-text-stroke:0.12px #000;">$100.00</span>
<svg style="left:1043px;top:458.8px" width="16" height="16" viewBox="0 0 17 17">
<defs><linearGradient id="pp4" x1="0" y1="0" x2="1" y2="1"><stop offset="0" stop-color="#bcd6f6"/><stop offset="1" stop-color="#e8f1fc"/></linearGradient>
<linearGradient id="pg4" x1="0" y1="0" x2="0" y2="1"><stop offset="0" stop-color="#ffffff"/><stop offset="0.35" stop-color="#e6e6e6"/><stop offset="0.45" stop-color="#a8a8a8"/><stop offset="0.7" stop-color="#c4c4c4"/><stop offset="1" stop-color="#f2f2f2"/></linearGradient></defs>
<path d="M3 5.5 Q3 5 3.5 5 H13.5 Q14 5 14 5.5" fill="none" stroke="#888" stroke-width="1"/>
<path d="M2.5 5.5 H14.5 Q16.5 5.5 16.5 8 V13.5 Q16.5 15.5 14.5 15.5 H2.5 Q0.5 15.5 0.5 13.5 V8 Q0.5 5.5 2.5 5.5 Z" fill="url(#pg4)" stroke="#3a3a3a" stroke-width="0.9"/>
<path d="M3.3 0.5 H10.2 L13 3.3 V7.5 H3.3 Z" fill="url(#pp4)" stroke="#3b82d4" stroke-width="1"/>
<rect x="2.2" y="8" width="12.6" height="0.8" fill="#f4f4f4"/>
<path d="M3.3 12.8 V15.7 H13 V12.8" fill="#eef5fd" stroke="#3b82d4" stroke-width="1"/>
</svg>
<svg style="left:1068.2px;top:459.6px;overflow:visible" width="15" height="15" viewBox="0 0 15 15">
<defs><linearGradient id="pc4" x1="0" y1="0" x2="0" y2="1"><stop offset="0" stop-color="#f4e07e"/><stop offset="0.5" stop-color="#e0b850"/><stop offset="1" stop-color="#b4822a"/></linearGradient>
<linearGradient id="pf4" x1="0" y1="0" x2="0" y2="1"><stop offset="0" stop-color="#d8d8d8"/><stop offset="1" stop-color="#9a9a9a"/></linearGradient></defs>
<g transform="rotate(-44 7.5 7.5)">
<path d="M2.6 5.1 H10.2 V9.9 H2.6 Z" fill="url(#pc4)"/>
<path d="M-1.15 7.5 L2.6 5.1 V9.9 Z" fill="#e5c690"/>
<path d="M-1.15 7.5 L0.4 6.5 V8.5 Z" fill="#1e1e1e"/>
<path d="M10.2 5.1 H13.4 V9.9 H10.2 Z" fill="url(#pf4)"/>
<path d="M13.4 5.1 H15 Q16.15 5.1 16.15 6.3 V8.7 Q16.15 9.9 15 9.9 H13.4 Z" fill="#eb9a80"/>
</g></svg>
<svg style="left:1090.1px;top:461.8px" width="12" height="11" viewBox="0 0 12 11"><path d="M0 0 H3.9 L5.3 2.9 L6.7 0 H10.7 L7.5 5 L10.9 10.1 H6.9 L5.3 6.8 L3.8 10.1 H0 L3.3 5 Z" fill="#ff0000"/></svg>
<div style="left:16px;top:518px;width:1090px;height:1px;background:#a8a8a8;"></div>
<span class="t" style="left:20.7px;top:489px;font-size:9.4px;letter-spacing:0.8px;color:#000;">1/9/2025</span>
<span class="t" style="left:78.4px;top:489px;font-size:9.7px;font-weight:bold;letter-spacing:0.33px;color:#000;">80104 Drug Screen, Multiple</span>
<span class="t" style="left:78.4px;top:502px;font-size:9.7px;font-weight:bold;letter-spacing:0.33px;color:#000;">Ana Castillo largaespada</span>
<span class="t" style="right:849.25px;top:498px;font-size:10.0px;letter-spacing:1.35px;color:#000;-webkit-text-stroke:0.12px #000;">100.00</span>
<span class="t" style="right:775.05px;top:498px;font-size:10.0px;letter-spacing:1.35px;color:#000;-webkit-text-stroke:0.12px #000;">0.00</span>
<span class="t" style="right:714.75px;top:498px;font-size:10.0px;letter-spacing:1.35px;color:#000;-webkit-text-stroke:0.12px #000;">0.00</span>
<span class="t" style="right:659.25px;top:498px;font-size:10.0px;letter-spacing:1.35px;color:#000;-webkit-text-stroke:0.12px #000;">0.00</span>
<span class="t" style="right:595.25px;top:498px;font-size:10.0px;letter-spacing:1.35px;color:#000;-webkit-text-stroke:0.12px #000;">0.00</span>
<span class="t" style="right:531.65px;top:498px;font-size:10.0px;letter-spacing:1.35px;color:#000;-webkit-text-stroke:0.12px #000;">0.00</span>
<span class="t" style="right:473.94999999999993px;top:498px;font-size:10.0px;letter-spacing:1.35px;color:#000;-webkit-text-stroke:0.12px #000;">0.00</span>
<span class="t" style="right:410.35px;top:498px;font-size:10.0px;letter-spacing:1.35px;color:#000;-webkit-text-stroke:0.12px #000;">0.00</span>
<span class="t" style="right:347.15px;top:498px;font-size:10.0px;letter-spacing:1.35px;color:#000;-webkit-text-stroke:0.12px #000;">0.00</span>
<span class="t" style="right:264.04999999999995px;top:498px;font-size:10.0px;letter-spacing:1.35px;color:#000;-webkit-text-stroke:0.12px #000;">$100.00</span>
<span class="t" style="right:187.85000000000005px;top:498px;font-size:10.0px;letter-spacing:1.35px;color:#000;-webkit-text-stroke:0.12px #000;">$0.00</span>
<span class="t" style="right:112.15px;top:498px;font-size:10.0px;letter-spacing:1.35px;color:#000;-webkit-text-stroke:0.12px #000;">$100.00</span>
<svg style="left:1043px;top:492.8px" width="16" height="16" viewBox="0 0 17 17">
<defs><linearGradient id="pp5" x1="0" y1="0" x2="1" y2="1"><stop offset="0" stop-color="#bcd6f6"/><stop offset="1" stop-color="#e8f1fc"/></linearGradient>
<linearGradient id="pg5" x1="0" y1="0" x2="0" y2="1"><stop offset="0" stop-color="#ffffff"/><stop offset="0.35" stop-color="#e6e6e6"/><stop offset="0.45" stop-color="#a8a8a8"/><stop offset="0.7" stop-color="#c4c4c4"/><stop offset="1" stop-color="#f2f2f2"/></linearGradient></defs>
<path d="M3 5.5 Q3 5 3.5 5 H13.5 Q14 5 14 5.5" fill="none" stroke="#888" stroke-width="1"/>
<path d="M2.5 5.5 H14.5 Q16.5 5.5 16.5 8 V13.5 Q16.5 15.5 14.5 15.5 H2.5 Q0.5 15.5 0.5 13.5 V8 Q0.5 5.5 2.5 5.5 Z" fill="url(#pg5)" stroke="#3a3a3a" stroke-width="0.9"/>
<path d="M3.3 0.5 H10.2 L13 3.3 V7.5 H3.3 Z" fill="url(#pp5)" stroke="#3b82d4" stroke-width="1"/>
<rect x="2.2" y="8" width="12.6" height="0.8" fill="#f4f4f4"/>
<path d="M3.3 12.8 V15.7 H13 V12.8" fill="#eef5fd" stroke="#3b82d4" stroke-width="1"/>
</svg>
<svg style="left:1068.2px;top:493.6px;overflow:visible" width="15" height="15" viewBox="0 0 15 15">
<defs><linearGradient id="pc5" x1="0" y1="0" x2="0" y2="1"><stop offset="0" stop-color="#f4e07e"/><stop offset="0.5" stop-color="#e0b850"/><stop offset="1" stop-color="#b4822a"/></linearGradient>
<linearGradient id="pf5" x1="0" y1="0" x2="0" y2="1"><stop offset="0" stop-color="#d8d8d8"/><stop offset="1" stop-color="#9a9a9a"/></linearGradient></defs>
<g transform="rotate(-44 7.5 7.5)">
<path d="M2.6 5.1 H10.2 V9.9 H2.6 Z" fill="url(#pc5)"/>
<path d="M-1.15 7.5 L2.6 5.1 V9.9 Z" fill="#e5c690"/>
<path d="M-1.15 7.5 L0.4 6.5 V8.5 Z" fill="#1e1e1e"/>
<path d="M10.2 5.1 H13.4 V9.9 H10.2 Z" fill="url(#pf5)"/>
<path d="M13.4 5.1 H15 Q16.15 5.1 16.15 6.3 V8.7 Q16.15 9.9 15 9.9 H13.4 Z" fill="#eb9a80"/>
</g></svg>
<svg style="left:1090.1px;top:495.8px" width="12" height="11" viewBox="0 0 12 11"><path d="M0 0 H3.9 L5.3 2.9 L6.7 0 H10.7 L7.5 5 L10.9 10.1 H6.9 L5.3 6.8 L3.8 10.1 H0 L3.3 5 Z" fill="#ff0000"/></svg>
<div style="left:16px;top:552px;width:1090px;height:1px;background:#a8a8a8;"></div>
<span class="t" style="left:20.7px;top:523px;font-size:9.4px;letter-spacing:0.8px;color:#000;">11/5/2024</span>
<span class="t" style="left:78.4px;top:523px;font-size:9.7px;font-weight:bold;letter-spacing:0.33px;color:#000;">90791 injection</span>
<span class="t" style="left:78.4px;top:536px;font-size:9.7px;font-weight:bold;letter-spacing:0.33px;color:#000;">Ana Castillo largaespada</span>
<span class="t" style="right:849.25px;top:532px;font-size:10.0px;letter-spacing:1.35px;color:#000;-webkit-text-stroke:0.12px #000;">50.00</span>
<span class="t" style="right:775.05px;top:532px;font-size:10.0px;letter-spacing:1.35px;color:#000;-webkit-text-stroke:0.12px #000;">0.00</span>
<span class="t" style="right:714.75px;top:532px;font-size:10.0px;letter-spacing:1.35px;color:#000;-webkit-text-stroke:0.12px #000;">0.00</span>
<span class="t" style="right:659.25px;top:532px;font-size:10.0px;letter-spacing:1.35px;color:#000;-webkit-text-stroke:0.12px #000;">0.00</span>
<span class="t" style="right:595.25px;top:532px;font-size:10.0px;letter-spacing:1.35px;color:#000;-webkit-text-stroke:0.12px #000;">0.00</span>
<span class="t" style="right:531.65px;top:532px;font-size:10.0px;letter-spacing:1.35px;color:#000;-webkit-text-stroke:0.12px #000;">0.00</span>
<span class="t" style="right:473.94999999999993px;top:532px;font-size:10.0px;letter-spacing:1.35px;color:#000;-webkit-text-stroke:0.12px #000;">0.00</span>
<span class="t" style="right:410.35px;top:532px;font-size:10.0px;letter-spacing:1.35px;color:#000;-webkit-text-stroke:0.12px #000;">0.00</span>
<span class="t" style="right:347.15px;top:532px;font-size:10.0px;letter-spacing:1.35px;color:#000;-webkit-text-stroke:0.12px #000;">0.00</span>
<span class="t" style="right:264.04999999999995px;top:532px;font-size:10.0px;letter-spacing:1.35px;color:#000;-webkit-text-stroke:0.12px #000;">$50.00</span>
<span class="t" style="right:187.85000000000005px;top:532px;font-size:10.0px;letter-spacing:1.35px;color:#000;-webkit-text-stroke:0.12px #000;">$50.00</span>
<span class="t" style="right:112.15px;top:532px;font-size:10.0px;letter-spacing:1.35px;color:#000;-webkit-text-stroke:0.12px #000;">$0.00</span>
<svg style="left:1043px;top:526.8px" width="16" height="16" viewBox="0 0 17 17">
<defs><linearGradient id="pp6" x1="0" y1="0" x2="1" y2="1"><stop offset="0" stop-color="#bcd6f6"/><stop offset="1" stop-color="#e8f1fc"/></linearGradient>
<linearGradient id="pg6" x1="0" y1="0" x2="0" y2="1"><stop offset="0" stop-color="#ffffff"/><stop offset="0.35" stop-color="#e6e6e6"/><stop offset="0.45" stop-color="#a8a8a8"/><stop offset="0.7" stop-color="#c4c4c4"/><stop offset="1" stop-color="#f2f2f2"/></linearGradient></defs>
<path d="M3 5.5 Q3 5 3.5 5 H13.5 Q14 5 14 5.5" fill="none" stroke="#888" stroke-width="1"/>
<path d="M2.5 5.5 H14.5 Q16.5 5.5 16.5 8 V13.5 Q16.5 15.5 14.5 15.5 H2.5 Q0.5 15.5 0.5 13.5 V8 Q0.5 5.5 2.5 5.5 Z" fill="url(#pg6)" stroke="#3a3a3a" stroke-width="0.9"/>
<path d="M3.3 0.5 H10.2 L13 3.3 V7.5 H3.3 Z" fill="url(#pp6)" stroke="#3b82d4" stroke-width="1"/>
<rect x="2.2" y="8" width="12.6" height="0.8" fill="#f4f4f4"/>
<path d="M3.3 12.8 V15.7 H13 V12.8" fill="#eef5fd" stroke="#3b82d4" stroke-width="1"/>
</svg>
<svg style="left:1068.2px;top:527.6px;overflow:visible" width="15" height="15" viewBox="0 0 15 15">
<defs><linearGradient id="pc6" x1="0" y1="0" x2="0" y2="1"><stop offset="0" stop-color="#f4e07e"/><stop offset="0.5" stop-color="#e0b850"/><stop offset="1" stop-color="#b4822a"/></linearGradient>
<linearGradient id="pf6" x1="0" y1="0" x2="0" y2="1"><stop offset="0" stop-color="#d8d8d8"/><stop offset="1" stop-color="#9a9a9a"/></linearGradient></defs>
<g transform="rotate(-44 7.5 7.5)">
<path d="M2.6 5.1 H10.2 V9.9 H2.6 Z" fill="url(#pc6)"/>
<path d="M-1.15 7.5 L2.6 5.1 V9.9 Z" fill="#e5c690"/>
<path d="M-1.15 7.5 L0.4 6.5 V8.5 Z" fill="#1e1e1e"/>
<path d="M10.2 5.1 H13.4 V9.9 H10.2 Z" fill="url(#pf6)"/>
<path d="M13.4 5.1 H15 Q16.15 5.1 16.15 6.3 V8.7 Q16.15 9.9 15 9.9 H13.4 Z" fill="#eb9a80"/>
</g></svg>
<svg style="left:1090.1px;top:529.8px" width="12" height="11" viewBox="0 0 12 11"><path d="M0 0 H3.9 L5.3 2.9 L6.7 0 H10.7 L7.5 5 L10.9 10.1 H6.9 L5.3 6.8 L3.8 10.1 H0 L3.3 5 Z" fill="#ff0000"/></svg>
<div style="left:16px;top:586px;width:1090px;height:1px;background:#a8a8a8;"></div>
<span class="t" style="left:20.7px;top:557px;font-size:9.4px;letter-spacing:0.8px;color:#000;">10/28/2024</span>
<span class="t" style="left:78.4px;top:557px;font-size:9.7px;font-weight:bold;letter-spacing:0.33px;color:#000;">90832 Psychotherapy 30 min.</span>
<span class="t" style="left:78.4px;top:570px;font-size:9.7px;font-weight:bold;letter-spacing:0.33px;color:#000;">Ana Castillo largaespada</span>
<span class="t" style="right:849.25px;top:566px;font-size:10.0px;letter-spacing:1.35px;color:#000;-webkit-text-stroke:0.12px #000;">100.00</span>
<span class="t" style="right:775.05px;top:566px;font-size:10.0px;letter-spacing:1.35px;color:#000;-webkit-text-stroke:0.12px #000;">60.00</span>
<span class="t" style="right:714.75px;top:566px;font-size:10.0px;letter-spacing:1.35px;color:#000;-webkit-text-stroke:0.12px #000;">0.00</span>
<span class="t" style="right:659.25px;top:566px;font-size:10.0px;letter-spacing:1.35px;color:#000;-webkit-text-stroke:0.12px #000;">0.00</span>
<span class="t" style="right:595.25px;top:566px;font-size:10.0px;letter-spacing:1.35px;color:#000;-webkit-text-stroke:0.12px #000;">0.00</span>
<span class="t" style="right:531.65px;top:566px;font-size:10.0px;letter-spacing:1.35px;color:#000;-webkit-text-stroke:0.12px #000;">0.00</span>
<span class="t" style="right:473.94999999999993px;top:566px;font-size:10.0px;letter-spacing:1.35px;color:#000;-webkit-text-stroke:0.12px #000;">0.00</span>
<span class="t" style="right:410.35px;top:566px;font-size:10.0px;letter-spacing:1.35px;color:#000;-webkit-text-stroke:0.12px #000;">0.00</span>
<span class="t" style="right:347.15px;top:566px;font-size:10.0px;letter-spacing:1.35px;color:#000;-webkit-text-stroke:0.12px #000;">0.00</span>
<span class="t" style="right:264.04999999999995px;top:566px;font-size:10.0px;letter-spacing:1.35px;color:#000;-webkit-text-stroke:0.12px #000;">$40.00</span>
<span class="t" style="right:187.85000000000005px;top:566px;font-size:10.0px;letter-spacing:1.35px;color:#000;-webkit-text-stroke:0.12px #000;">$40.00</span>
<span class="t" style="right:112.15px;top:566px;font-size:10.0px;letter-spacing:1.35px;color:#000;-webkit-text-stroke:0.12px #000;">$0.00</span>
<svg style="left:1043px;top:560.8px" width="16" height="16" viewBox="0 0 17 17">
<defs><linearGradient id="pp7" x1="0" y1="0" x2="1" y2="1"><stop offset="0" stop-color="#bcd6f6"/><stop offset="1" stop-color="#e8f1fc"/></linearGradient>
<linearGradient id="pg7" x1="0" y1="0" x2="0" y2="1"><stop offset="0" stop-color="#ffffff"/><stop offset="0.35" stop-color="#e6e6e6"/><stop offset="0.45" stop-color="#a8a8a8"/><stop offset="0.7" stop-color="#c4c4c4"/><stop offset="1" stop-color="#f2f2f2"/></linearGradient></defs>
<path d="M3 5.5 Q3 5 3.5 5 H13.5 Q14 5 14 5.5" fill="none" stroke="#888" stroke-width="1"/>
<path d="M2.5 5.5 H14.5 Q16.5 5.5 16.5 8 V13.5 Q16.5 15.5 14.5 15.5 H2.5 Q0.5 15.5 0.5 13.5 V8 Q0.5 5.5 2.5 5.5 Z" fill="url(#pg7)" stroke="#3a3a3a" stroke-width="0.9"/>
<path d="M3.3 0.5 H10.2 L13 3.3 V7.5 H3.3 Z" fill="url(#pp7)" stroke="#3b82d4" stroke-width="1"/>
<rect x="2.2" y="8" width="12.6" height="0.8" fill="#f4f4f4"/>
<path d="M3.3 12.8 V15.7 H13 V12.8" fill="#eef5fd" stroke="#3b82d4" stroke-width="1"/>
</svg>
<svg style="left:1068.2px;top:561.6px;overflow:visible" width="15" height="15" viewBox="0 0 15 15">
<defs><linearGradient id="pc7" x1="0" y1="0" x2="0" y2="1"><stop offset="0" stop-color="#f4e07e"/><stop offset="0.5" stop-color="#e0b850"/><stop offset="1" stop-color="#b4822a"/></linearGradient>
<linearGradient id="pf7" x1="0" y1="0" x2="0" y2="1"><stop offset="0" stop-color="#d8d8d8"/><stop offset="1" stop-color="#9a9a9a"/></linearGradient></defs>
<g transform="rotate(-44 7.5 7.5)">
<path d="M2.6 5.1 H10.2 V9.9 H2.6 Z" fill="url(#pc7)"/>
<path d="M-1.15 7.5 L2.6 5.1 V9.9 Z" fill="#e5c690"/>
<path d="M-1.15 7.5 L0.4 6.5 V8.5 Z" fill="#1e1e1e"/>
<path d="M10.2 5.1 H13.4 V9.9 H10.2 Z" fill="url(#pf7)"/>
<path d="M13.4 5.1 H15 Q16.15 5.1 16.15 6.3 V8.7 Q16.15 9.9 15 9.9 H13.4 Z" fill="#eb9a80"/>
</g></svg>
<svg style="left:1090.1px;top:563.8px" width="12" height="11" viewBox="0 0 12 11"><path d="M0 0 H3.9 L5.3 2.9 L6.7 0 H10.7 L7.5 5 L10.9 10.1 H6.9 L5.3 6.8 L3.8 10.1 H0 L3.3 5 Z" fill="#ff0000"/></svg>
<span class="t" style="left:20.7px;top:591px;font-size:9.4px;letter-spacing:0.8px;color:#000;">10/21/2024</span>
<span class="t" style="left:78.4px;top:591px;font-size:9.7px;font-weight:bold;letter-spacing:0.33px;color:#000;">04122 JtabordaTest</span>
<span class="t" style="left:78.4px;top:604px;font-size:9.7px;font-weight:bold;letter-spacing:0.33px;color:#000;">Ana Castillo largaespada</span>
<span class="t" style="right:849.25px;top:600px;font-size:10.0px;letter-spacing:1.35px;color:#000;-webkit-text-stroke:0.12px #000;">100.00</span>
<span class="t" style="right:775.05px;top:600px;font-size:10.0px;letter-spacing:1.35px;color:#000;-webkit-text-stroke:0.12px #000;">20.00</span>
<span class="t" style="right:714.75px;top:600px;font-size:10.0px;letter-spacing:1.35px;color:#000;-webkit-text-stroke:0.12px #000;">0.00</span>
<span class="t" style="right:659.25px;top:600px;font-size:10.0px;letter-spacing:1.35px;color:#000;-webkit-text-stroke:0.12px #000;">0.00</span>
<span class="t" style="right:595.25px;top:600px;font-size:10.0px;letter-spacing:1.35px;color:#000;-webkit-text-stroke:0.12px #000;">0.00</span>
<span class="t" style="right:531.65px;top:600px;font-size:10.0px;letter-spacing:1.35px;color:#000;-webkit-text-stroke:0.12px #000;">0.00</span>
<span class="t" style="right:473.94999999999993px;top:600px;font-size:10.0px;letter-spacing:1.35px;color:#000;-webkit-text-stroke:0.12px #000;">0.00</span>
<span class="t" style="right:410.35px;top:600px;font-size:10.0px;letter-spacing:1.35px;color:#000;-webkit-text-stroke:0.12px #000;">0.00</span>
<span class="t" style="right:347.15px;top:600px;font-size:10.0px;letter-spacing:1.35px;color:#000;-webkit-text-stroke:0.12px #000;">0.00</span>
<span class="t" style="right:264.04999999999995px;top:600px;font-size:10.0px;letter-spacing:1.35px;color:#000;-webkit-text-stroke:0.12px #000;">$80.00</span>
<span class="t" style="right:187.85000000000005px;top:600px;font-size:10.0px;letter-spacing:1.35px;color:#000;-webkit-text-stroke:0.12px #000;">$80.00</span>
<span class="t" style="right:112.15px;top:600px;font-size:10.0px;letter-spacing:1.35px;color:#000;-webkit-text-stroke:0.12px #000;">$0.00</span>
<svg style="left:1043px;top:594.8px" width="16" height="16" viewBox="0 0 17 17">
<defs><linearGradient id="pp8" x1="0" y1="0" x2="1" y2="1"><stop offset="0" stop-color="#bcd6f6"/><stop offset="1" stop-color="#e8f1fc"/></linearGradient>
<linearGradient id="pg8" x1="0" y1="0" x2="0" y2="1"><stop offset="0" stop-color="#ffffff"/><stop offset="0.35" stop-color="#e6e6e6"/><stop offset="0.45" stop-color="#a8a8a8"/><stop offset="0.7" stop-color="#c4c4c4"/><stop offset="1" stop-color="#f2f2f2"/></linearGradient></defs>
<path d="M3 5.5 Q3 5 3.5 5 H13.5 Q14 5 14 5.5" fill="none" stroke="#888" stroke-width="1"/>
<path d="M2.5 5.5 H14.5 Q16.5 5.5 16.5 8 V13.5 Q16.5 15.5 14.5 15.5 H2.5 Q0.5 15.5 0.5 13.5 V8 Q0.5 5.5 2.5 5.5 Z" fill="url(#pg8)" stroke="#3a3a3a" stroke-width="0.9"/>
<path d="M3.3 0.5 H10.2 L13 3.3 V7.5 H3.3 Z" fill="url(#pp8)" stroke="#3b82d4" stroke-width="1"/>
<rect x="2.2" y="8" width="12.6" height="0.8" fill="#f4f4f4"/>
<path d="M3.3 12.8 V15.7 H13 V12.8" fill="#eef5fd" stroke="#3b82d4" stroke-width="1"/>
</svg>
<svg style="left:1068.2px;top:595.6px;overflow:visible" width="15" height="15" viewBox="0 0 15 15">
<defs><linearGradient id="pc8" x1="0" y1="0" x2="0" y2="1"><stop offset="0" stop-color="#f4e07e"/><stop offset="0.5" stop-color="#e0b850"/><stop offset="1" stop-color="#b4822a"/></linearGradient>
<linearGradient id="pf8" x1="0" y1="0" x2="0" y2="1"><stop offset="0" stop-color="#d8d8d8"/><stop offset="1" stop-color="#9a9a9a"/></linearGradient></defs>
<g transform="rotate(-44 7.5 7.5)">
<path d="M2.6 5.1 H10.2 V9.9 H2.6 Z" fill="url(#pc8)"/>
<path d="M-1.15 7.5 L2.6 5.1 V9.9 Z" fill="#e5c690"/>
<path d="M-1.15 7.5 L0.4 6.5 V8.5 Z" fill="#1e1e1e"/>
<path d="M10.2 5.1 H13.4 V9.9 H10.2 Z" fill="url(#pf8)"/>
<path d="M13.4 5.1 H15 Q16.15 5.1 16.15 6.3 V8.7 Q16.15 9.9 15 9.9 H13.4 Z" fill="#eb9a80"/>
</g></svg>
<svg style="left:1090.1px;top:597.8px" width="12" height="11" viewBox="0 0 12 11"><path d="M0 0 H3.9 L5.3 2.9 L6.7 0 H10.7 L7.5 5 L10.9 10.1 H6.9 L5.3 6.8 L3.8 10.1 H0 L3.3 5 Z" fill="#ff0000"/></svg>
<div style="left:1106px;top:314px;width:1px;height:306px;background:#b4b4b4;"></div>
<div style="left:1107px;top:314px;width:11px;height:306px;background:#fff;"></div>
<div style="left:1117px;top:314px;width:1px;height:306px;background:#d8d8d8;"></div>
<div style="left:1107px;top:326px;width:10px;height:2px;background:#bababa;"></div>
<div style="left:1107px;top:340px;width:11px;height:270px;background:#c2c2c2;"></div>
<svg style="left:1107px;top:316px" width="11" height="8" viewBox="0 0 11 8"><path d="M1.7 6.9 L5 3.2 L8.3 6.9 Z" fill="#a0a0a0"/></svg>
<svg style="left:1107px;top:610px" width="11" height="8" viewBox="0 0 11 8"><path d="M1.9 3.2 L5.4 7.3 L8.9 3.2 Z" fill="#a0a0a0"/></svg>
<div style="left:15px;top:624px;width:138px;height:28px;background:#b4daff;"></div>
<span class="t" style="left:-215.5px;width:600px;text-align:center;top:632px;font-size:11.6px;font-weight:bold;color:#000;">Refresh All From Note</span>
<div style="left:157px;top:624px;width:108px;height:28px;background:#b4daff;"></div>
<span class="t" style="left:-88.69999999999999px;width:600px;text-align:center;top:633px;font-size:11.5px;font-weight:bold;color:#000;">Add Late Fee</span>
<div style="left:992px;top:624px;width:127px;height:28px;background:#b4daff;"></div>
<span class="t" style="left:756.2px;width:600px;text-align:center;top:633px;font-size:11.85px;font-weight:bold;color:#000;">Prepayment Report</span>
<svg style="left:1030px;top:250px" width="70" height="120" viewBox="1030 250 70 120">
<defs><filter id="sh" x="-50%" y="-50%" width="200%" height="200%"><feGaussianBlur in="SourceAlpha" stdDeviation="2.3"/><feOffset dx="1.8" dy="1.5"/><feComponentTransfer><feFuncA type="linear" slope="0.38"/></feComponentTransfer><feMerge><feMergeNode/><feMergeNode in="SourceGraphic"/></feMerge></filter></defs>
<g filter="url(#sh)">
<line x1="1083" y1="263.3" x2="1057.5" y2="345" stroke="#fc4444" stroke-width="4.1" stroke-linecap="round"/>
<path d="M1051.2 344.2 L1062.4 347.6 L1053.2 356.6 Z" fill="#fc4444" stroke="#fc4444" stroke-width="1" stroke-linejoin="round"/>
</g></svg>
<div style="left:0px;top:0px;width:1132px;height:2px;background:#000;"></div>
<div style="left:0px;top:662px;width:1132px;height:2px;background:#000;"></div>
<div style="left:0px;top:0px;width:2px;height:664px;background:#000;"></div>
<div style="left:1130px;top:0px;width:2px;height:664px;background:#000;"></div>
</body></html>
